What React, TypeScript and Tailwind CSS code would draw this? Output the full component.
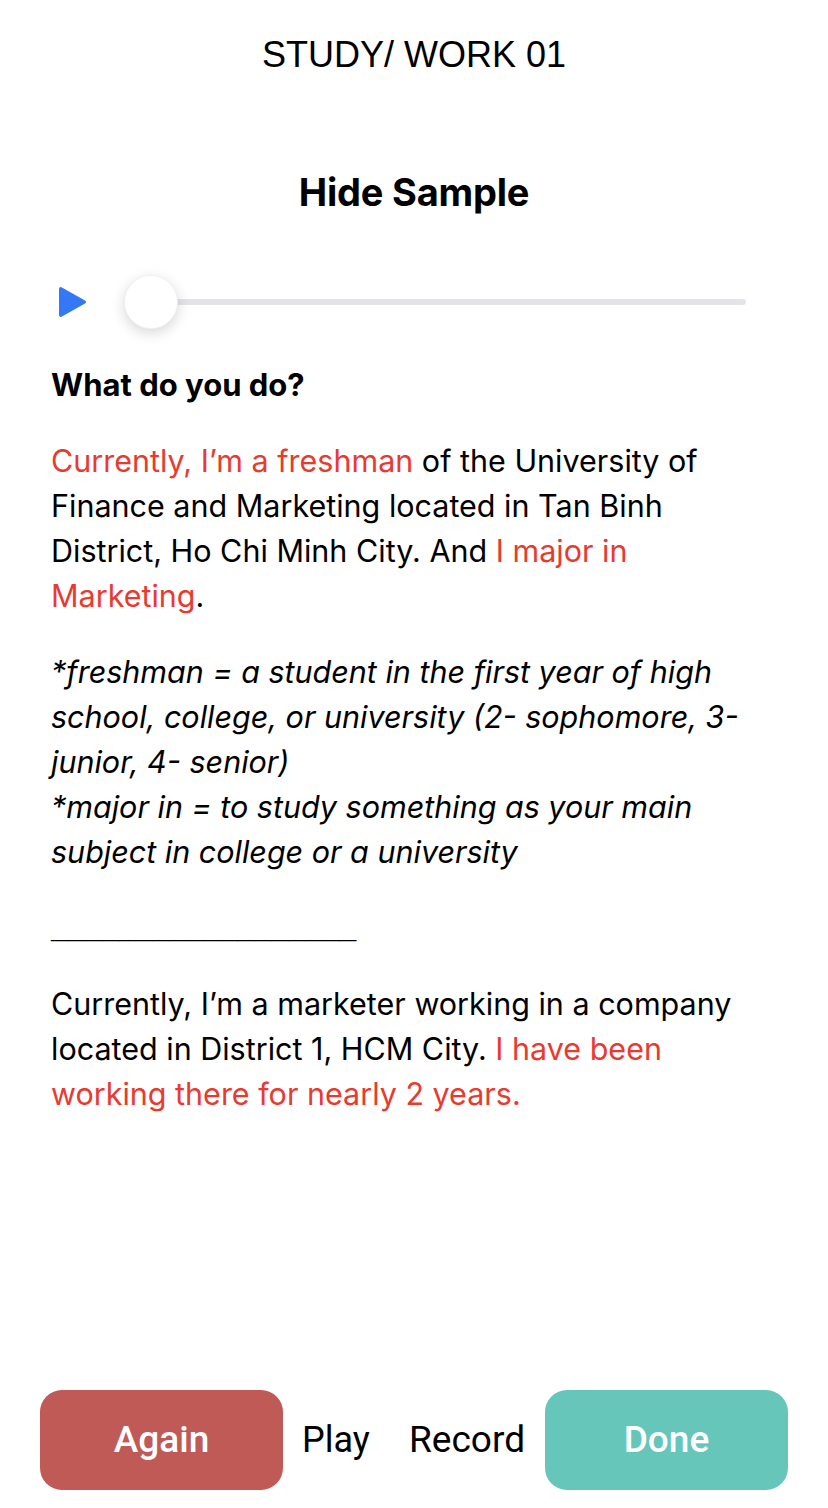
import { useState } from "react";

const red = "text-[#e93a2f]";

const App = () => {
  const [progress] = useState<number>(0);

  return (
    <div className="flex min-h-screen flex-col bg-white font-['Inter',sans-serif] text-black">
      <header className="pt-[34px] text-center font-['Liberation_Sans',Arial,sans-serif] text-[36px] leading-[42px]">
        STUDY/ WORK 01
      </header>

      <h1 className="mt-[93px] text-center text-[38px] leading-[46px] font-bold tracking-[-0.2px]">
        Hide Sample
      </h1>

      {/* audio player */}
      <div className="mt-[57px] flex h-[60px] items-center pr-[82px] pl-[57px]">
        <svg width="30" height="32" viewBox="0 0 30 32" className="shrink-0">
          <path
            d="M2 3.5 C2 1.2 3.6 0.4 5.4 1.8 L28 14.4 C29.4 15.3 29.4 16.7 28 17.6 L5.4 30.2 C3.6 31.6 2 30.8 2 28.5 Z"
            fill="#3478f6"
          />
        </svg>
        <div className="relative ml-[37px] flex h-[54px] flex-1 items-center">
          <div className="ml-[27px] h-[6px] flex-1 rounded-full bg-[#e4e4e8]" />
          <div
            className="absolute top-0 size-[54px] rounded-full border border-black/5 bg-white shadow-[0_4px_14px_rgba(0,0,0,0.16)]"
            style={{ left: `${progress}%` }}
          />
        </div>
      </div>

      <main className="px-[51px] text-[30.5px] leading-[45px]">
        <h2 className="mt-[30px] text-[31px] font-bold">What do you do?</h2>

        <p className="mt-[31px]">
          <span className={red}>Currently, I’m a freshman</span> of the University of
          <br />
          Finance and Marketing located in Tan Binh
          <br />
          District, Ho Chi Minh City. And <span className={red}>I major in</span>
          <br />
          <span className={red}>Marketing</span>.
        </p>

        <p className="mt-[31px] italic">
          *freshman = a student in the first year of high
          <br />
          school, college, or university (2- sophomore, 3-
          <br />
          junior, 4- senior)
          <br />
          *major in = to study something as your main
          <br />
          subject in college or a university
        </p>

        <p className="mt-[30px] font-['Liberation_Sans',Arial,sans-serif] text-[30.5px] font-bold">
          __________________
        </p>

        <p className="mt-[32px]">
          Currently, I’m a marketer working in a company
          <br />
          located in District 1, HCM City. <span className={red}>I have been</span>
          <br />
          <span className={red}>working there for nearly 2 years.</span>
        </p>
      </main>

      <footer className="mt-auto flex items-center px-[40px] pb-[18px] font-['Roboto',sans-serif] text-[37px]">
        <button className="h-[100px] w-[243px] rounded-[22px] bg-[#c05a56] font-medium text-white">
          Again
        </button>
        <div className="flex flex-1 items-center justify-between pr-[20px] pl-[19px]">
          <button className="text-[36px]">Play</button>
          <button>Record</button>
        </div>
        <button className="h-[100px] w-[243px] rounded-[22px] bg-[#67c6ba] font-medium text-white">
          Done
        </button>
      </footer>
    </div>
  );
};

export default App;
